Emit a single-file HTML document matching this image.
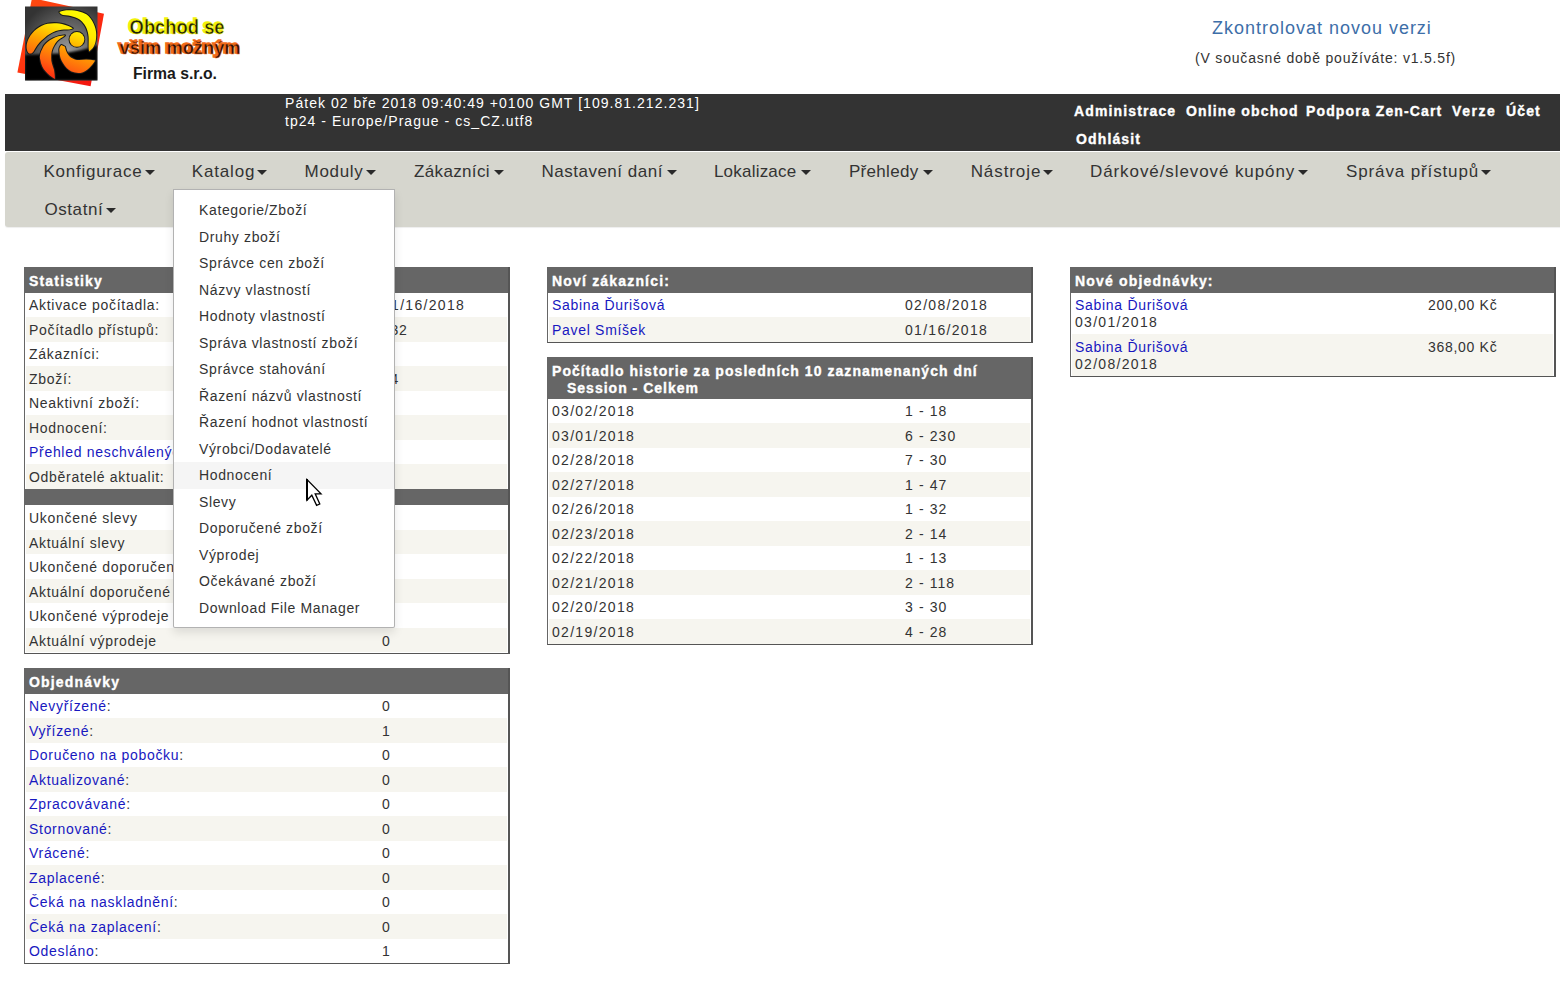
<!DOCTYPE html>
<html lang="cs"><head><meta charset="utf-8"><title>Zen Cart Admin</title>
<style>
html,body{margin:0;padding:0;width:1560px;height:981px;overflow:hidden;background:#fff}
body{font-family:"Liberation Sans",sans-serif;color:#333;font-size:14px;position:relative}
.a{position:absolute;white-space:nowrap}
a{text-decoration:none}
#logo{left:0;top:0}
.lt{font-weight:bold;font-family:"Liberation Sans",sans-serif}
#hdr{left:5px;top:94px;width:1600px;height:57px;background:#333}
#nav{left:5px;top:152px;width:1600px;height:75px;background:#d6d6ce;border-radius:3px;box-shadow:0 1px 1px rgba(0,0,0,.07)}
.hd{color:#fff;font-size:14px;line-height:17px;letter-spacing:1.04px}
.hl{color:#fff;font-size:14px;line-height:17px;font-weight:bold;letter-spacing:1.13px;-webkit-text-stroke:.35px #fff}
.ni{font-size:17px;line-height:20px;color:#333;letter-spacing:.06em}
.car{display:block;width:0;height:0;border-top:5px solid #2a2a2a;border-left:5px solid transparent;border-right:5px solid transparent}
#dd{left:173px;top:189px;width:220px;height:437px;background:#fff;border:1px solid rgba(0,0,0,.3);border-radius:0 0 2px 2px;box-shadow:0 5px 10px rgba(0,0,0,.1)}
.di{position:absolute;left:0;width:220px;height:26.5px;font-size:14px;line-height:17px;letter-spacing:.045em;color:#333}
.di span{position:absolute;left:25px;top:5.3px}
.box{position:absolute;width:483px;border-left:1px solid #666;border-right:2px solid #555;border-bottom:1px solid #555;background:#fff;padding-bottom:.5px}
.th{background:#666;color:#fff;font-weight:bold;height:25.5px;position:relative}
.th span{position:absolute;left:4px;top:6px;line-height:17px;letter-spacing:1.18px;-webkit-text-stroke:.35px #fff}
.r{height:24.5px;position:relative;margin:0 1px 0 1px}
.r.c{background:#f6f5ef}
.r span{position:absolute;top:4.9px;line-height:17px;letter-spacing:.7px}
.r span.n{letter-spacing:1.3px}
.r span.m{letter-spacing:1.1px}
.l1{left:3px}
.l2{left:356px}
a.k{color:#1818c0}
.ver1{left:1212px;top:16.8px;font-size:18px;line-height:22px;color:#3d6ea8;letter-spacing:.055em}
.ver2{left:1195px;top:50px;font-size:14px;line-height:17px;color:#333;letter-spacing:.81px}
</style></head>
<body>
<svg id="logo" class="a" width="250" height="92" viewBox="0 0 250 92">
<defs><filter id="bl" x="-10%" y="-10%" width="120%" height="120%"><feGaussianBlur stdDeviation="1.2"/></filter><clipPath id="sq"><rect x="25" y="6.5" width="72.5" height="74"/></clipPath>
<radialGradient id="gb2" gradientUnits="userSpaceOnUse" cx="68" cy="50" r="50"><stop offset="0" stop-color="#9a9a9a"/><stop offset=".45" stop-color="#6a6a6a"/><stop offset="1" stop-color="#333"/></radialGradient><linearGradient id="gb" x1="0" y1="0" x2="0" y2="1"><stop offset="0" stop-color="#3a3a3a"/><stop offset=".55" stop-color="#8a8a8a"/><stop offset=".64" stop-color="#0a0a0a"/><stop offset="1" stop-color="#000"/></linearGradient>
<linearGradient id="gy" gradientUnits="userSpaceOnUse" x1="80" y1="10" x2="55" y2="80"><stop offset="0" stop-color="#ffff00"/><stop offset=".3" stop-color="#ffe800"/><stop offset=".55" stop-color="#ffa000"/><stop offset=".8" stop-color="#ff6010"/><stop offset="1" stop-color="#ff2a10"/></linearGradient>
<linearGradient id="gr" x1="0" y1="0" x2="1" y2="1"><stop offset="0" stop-color="#ff5010"/><stop offset=".5" stop-color="#ff3010"/><stop offset="1" stop-color="#f01010"/></linearGradient>
</defs>
<polygon points="32,-2 104,13.8 90.6,86.2 17.4,72.6" fill="url(#gr)"/>
<rect x="25" y="6.5" width="72.5" height="74" fill="url(#gb2)"/>
<path d="M25,55 C40,54 55,54 68,52.5 C80,51 90,48 97.5,45 L97.5,80.5 L25,80.5 Z" fill="#050505" filter="url(#bl)" clip-path="url(#sq)"/>
<g fill="url(#gy)" stroke="#1a1a1a" stroke-width="2" stroke-linejoin="round" paint-order="stroke">
<path d="M59.4,11.9 C66,9 82,10 88.5,16 C94,22 97,30 96.1,38 C95.5,44 94,48 89.3,51.4 C88,48 89,42 88.6,36.7 C88,30 86,26 82,21.5 C77,17 70,15.5 63.1,15.1 C61,14.5 60,13 59.4,11.9 Z"/>
<path d="M72.8,28.4 C67,24 56,22 47.5,23.8 C40,25.5 32.5,31 28.5,39 C26,44 26,50 28.5,53 C30.5,54.5 32.5,53 33.5,51.5 C36,47 38.5,43.5 41.5,40.6 C45,37 49,34 52.5,32.4 C57,30.5 61,29.8 64,29.6 C68,29.6 71,29.2 72.8,28.4 Z"/>
<path d="M65,35.3 C60,35.5 56,37 53,38.5 C48,41 44,45 42.9,47.7 C40,53 39.5,56 40.2,59.6 C41,65 43,69 45.7,71.6 C48,74.5 51,77 54.9,78.9 C55,76 54.5,73 54,69.7 C52.5,65 51,62 51.2,57.8 C51,53 52,49 53.9,45.9 C56,42 58,40 60.4,38.5 C62,37.5 64,36.5 65,35.3 Z"/>
<path d="M61.3,45 C59.5,47 59,49 59.4,51.4 C59.5,56 61,60 63.1,63.3 C65.5,67 68,70 71.4,71.6 C75,73 78.5,73.5 82.4,72.5 C87,71 92,66 95.2,60.6 C92,60 89,59.8 86.1,59.6 C82,60 78,60.5 75,59.6 C72,58.5 69.5,57 67.7,54.1 C66,51.5 65.5,49 65,46.8 C63.5,46 62.5,45.5 61.3,45 Z"/>
<circle cx="76.9" cy="39.4" r="7.4"/>
</g>
<text x="128" y="33" class="lt" font-size="19.5" fill="#f2f20a" stroke="#f2f20a" stroke-width="1.6" textLength="95" lengthAdjust="spacingAndGlyphs">Obchod se</text>
<text x="129.6" y="33.6" class="lt" font-size="19.5" fill="#202008" stroke="#f2f20a" stroke-width=".55" textLength="95" lengthAdjust="spacingAndGlyphs">Obchod se</text>
<text x="118" y="53" class="lt" font-size="19" fill="#f26a18" stroke="#f26a18" stroke-width="1.6" textLength="121" lengthAdjust="spacingAndGlyphs">všim možným</text>
<text x="119.6" y="53.6" class="lt" font-size="19" fill="#2a1408" stroke="#f26a18" stroke-width=".55" textLength="121" lengthAdjust="spacingAndGlyphs">všim možným</text>
<text x="133" y="79" class="lt" font-size="16" fill="#1a1a1a" textLength="84" lengthAdjust="spacingAndGlyphs">Firma s.r.o.</text>
</svg>

<div class="a ver1">Zkontrolovat novou verzi</div>
<div class="a ver2">(V současné době používáte: v1.5.5f)</div>

<div id="hdr" class="a"></div>
<div class="a hd" style="left:285px;top:94.5px">Pátek 02 bře 2018 09:40:49 +0100 GMT [109.81.212.231]</div>
<div class="a hd" style="left:285px;top:112.5px">tp24 - Europe/Prague - cs_CZ.utf8</div>
<div class="a hl" style="left:1074px;top:103px">Administrace</div>
<div class="a hl" style="left:1186px;top:103px">Online obchod</div>
<div class="a hl" style="left:1306px;top:103px">Podpora Zen-Cart</div>
<div class="a hl" style="left:1452px;top:103px;letter-spacing:1.58px">Verze</div>
<div class="a hl" style="left:1506px;top:103px">Účet</div>
<div class="a hl" style="left:1076px;top:131px">Odhlásit</div>

<div id="nav" class="a"></div>
<div class="a ni" style="left:43.4px;top:162px;letter-spacing:0.76px">Konfigurace</div><i class="a car" style="left:145.0px;top:170px"></i>
<div class="a ni" style="left:191.8px;top:162px;letter-spacing:0.82px">Katalog</div><i class="a car" style="left:256.8px;top:170px"></i>
<div class="a ni" style="left:304.6px;top:162px;letter-spacing:0.68px">Moduly</div><i class="a car" style="left:366.1px;top:170px"></i>
<div class="a ni" style="left:414.0px;top:162px;letter-spacing:0.35px">Zákazníci</div><i class="a car" style="left:493.8px;top:170px"></i>
<div class="a ni" style="left:541.5px;top:162px;letter-spacing:0.5px">Nastavení daní</div><i class="a car" style="left:666.9px;top:170px"></i>
<div class="a ni" style="left:713.9px;top:162px;letter-spacing:0.22px">Lokalizace</div><i class="a car" style="left:800.9px;top:170px"></i>
<div class="a ni" style="left:848.9px;top:162px;letter-spacing:0.31px">Přehledy</div><i class="a car" style="left:923.1px;top:170px"></i>
<div class="a ni" style="left:970.7px;top:162px;letter-spacing:0.91px">Nástroje</div><i class="a car" style="left:1043.1px;top:170px"></i>
<div class="a ni" style="left:1090.0px;top:162px;letter-spacing:0.91px">Dárkové/slevové kupóny</div><i class="a car" style="left:1297.9px;top:170px"></i>
<div class="a ni" style="left:1346.0px;top:162px;letter-spacing:0.87px">Správa přístupů</div><i class="a car" style="left:1481.1px;top:170px"></i>
<div class="a ni" style="left:44.4px;top:199.5px;letter-spacing:0.59px">Ostatní</div><i class="a car" style="left:106px;top:207.5px"></i>

<!-- Statistiky -->
<div class="box" style="left:24px;top:267px">
 <div class="th"><span>Statistiky</span></div>
 <div class="r"><span class="l1">Aktivace počítadla:</span><span class="l2 n">01/16/2018</span></div>
 <div class="r c"><span class="l1">Počítadlo přístupů:</span><span class="l2">232</span></div>
 <div class="r"><span class="l1">Zákazníci:</span><span class="l2">2</span></div>
 <div class="r c"><span class="l1">Zboží:</span><span class="l2">14</span></div>
 <div class="r"><span class="l1">Neaktivní zboží:</span><span class="l2">0</span></div>
 <div class="r c"><span class="l1">Hodnocení:</span><span class="l2">1</span></div>
 <div class="r"><span class="l1"><a class="k">Přehled neschválených hodnocení</a>:</span><span class="l2">0</span></div>
 <div class="r c"><span class="l1">Odběratelé aktualit:</span><span class="l2">0</span></div>
 <div class="th" style="height:16.8px"></div>
 <div class="r"><span class="l1">Ukončené slevy</span><span class="l2">0</span></div>
 <div class="r c"><span class="l1">Aktuální slevy</span><span class="l2">0</span></div>
 <div class="r"><span class="l1">Ukončené doporučené zboží</span><span class="l2">0</span></div>
 <div class="r c"><span class="l1">Aktuální doporučené zboží</span><span class="l2">0</span></div>
 <div class="r"><span class="l1">Ukončené výprodeje</span><span class="l2">0</span></div>
 <div class="r c"><span class="l1">Aktuální výprodeje</span><span class="l2">0</span></div>
</div>

<!-- Objednavky -->
<div class="box" style="left:24px;top:668px;padding-bottom:0">
 <div class="th"><span>Objednávky</span></div>
 <div class="r"><span class="l1"><a class="k">Nevyřízené</a>:</span><span class="l2">0</span></div>
 <div class="r c"><span class="l1"><a class="k">Vyřízené</a>:</span><span class="l2">1</span></div>
 <div class="r"><span class="l1"><a class="k">Doručeno na pobočku</a>:</span><span class="l2">0</span></div>
 <div class="r c"><span class="l1"><a class="k">Aktualizované</a>:</span><span class="l2">0</span></div>
 <div class="r"><span class="l1"><a class="k">Zpracovávané</a>:</span><span class="l2">0</span></div>
 <div class="r c"><span class="l1"><a class="k">Stornované</a>:</span><span class="l2">0</span></div>
 <div class="r"><span class="l1"><a class="k">Vrácené</a>:</span><span class="l2">0</span></div>
 <div class="r c"><span class="l1"><a class="k">Zaplacené</a>:</span><span class="l2">0</span></div>
 <div class="r"><span class="l1"><a class="k">Čeká na naskladnění</a>:</span><span class="l2">0</span></div>
 <div class="r c"><span class="l1"><a class="k">Čeká na zaplacení</a>:</span><span class="l2">0</span></div>
 <div class="r"><span class="l1"><a class="k">Odesláno</a>:</span><span class="l2">1</span></div>
</div>

<!-- Novi zakaznici -->
<div class="box" style="left:547px;top:267px">
 <div class="th"><span>Noví zákazníci:</span></div>
 <div class="r"><span class="l1"><a class="k">Sabina Ďurišová</a></span><span class="l2 n">02/08/2018</span></div>
 <div class="r c"><span class="l1"><a class="k">Pavel Smíšek</a></span><span class="l2 n">01/16/2018</span></div>
</div>

<!-- Historie -->
<div class="box" style="left:547px;top:357px">
 <div class="th" style="height:41.6px"><span style="letter-spacing:1.06px">Počítadlo historie za posledních 10 zaznamenaných dní</span><span style="left:19px;top:23px;letter-spacing:1.0px">Session - Celkem</span></div>
 <div class="r"><span class="l1 n">03/02/2018</span><span class="l2 m">1 - 18</span></div>
 <div class="r c"><span class="l1 n">03/01/2018</span><span class="l2 m">6 - 230</span></div>
 <div class="r"><span class="l1 n">02/28/2018</span><span class="l2 m">7 - 30</span></div>
 <div class="r c"><span class="l1 n">02/27/2018</span><span class="l2 m">1 - 47</span></div>
 <div class="r"><span class="l1 n">02/26/2018</span><span class="l2 m">1 - 32</span></div>
 <div class="r c"><span class="l1 n">02/23/2018</span><span class="l2 m">2 - 14</span></div>
 <div class="r"><span class="l1 n">02/22/2018</span><span class="l2 m">1 - 13</span></div>
 <div class="r c"><span class="l1 n">02/21/2018</span><span class="l2 m">2 - 118</span></div>
 <div class="r"><span class="l1 n">02/20/2018</span><span class="l2 m">3 - 30</span></div>
 <div class="r c"><span class="l1 n">02/19/2018</span><span class="l2 m">4 - 28</span></div>
</div>

<!-- Nove objednavky -->
<div class="box" style="left:1070px;top:267px">
 <div class="th"><span>Nové objednávky:</span></div>
 <div class="r" style="height:41.5px"><span class="l1"><a class="k">Sabina Ďurišová</a><br><b style="font-weight:normal;letter-spacing:1.3px">03/01/2018</b></span><span class="l2">200,00 Kč</span></div>
 <div class="r c" style="height:41.5px"><span class="l1"><a class="k">Sabina Ďurišová</a><br><b style="font-weight:normal;letter-spacing:1.3px">02/08/2018</b></span><span class="l2">368,00 Kč</span></div>
</div>

<!-- dropdown -->
<div id="dd" class="a">
 <div class="di" style="top:7.20px"><span>Kategorie/Zboží</span></div>
 <div class="di" style="top:33.68px"><span>Druhy zboží</span></div>
 <div class="di" style="top:60.16px"><span>Správce cen zboží</span></div>
 <div class="di" style="top:86.64px"><span>Názvy vlastností</span></div>
 <div class="di" style="top:113.12px"><span>Hodnoty vlastností</span></div>
 <div class="di" style="top:139.60px"><span>Správa vlastností zboží</span></div>
 <div class="di" style="top:166.08px"><span>Správce stahování</span></div>
 <div class="di" style="top:192.56px"><span>Řazení názvů vlastností</span></div>
 <div class="di" style="top:219.04px"><span>Řazení hodnot vlastností</span></div>
 <div class="di" style="top:245.52px"><span>Výrobci/Dodavatelé</span></div>
 <div class="di" style="top:272.00px;background:#f5f5f5"><span>Hodnocení</span></div>
 <div class="di" style="top:298.48px"><span>Slevy</span></div>
 <div class="di" style="top:324.96px"><span>Doporučené zboží</span></div>
 <div class="di" style="top:351.44px"><span>Výprodej</span></div>
 <div class="di" style="top:377.92px"><span>Očekávané zboží</span></div>
 <div class="di" style="top:404.40px"><span>Download File Manager</span></div>
</div>

<!-- cursor -->
<svg class="a" style="left:300px;top:474px" width="30" height="36" viewBox="0 0 30 36">
<path d="M7,5.6 L7,26.2 L11.8,21.2 L16.6,31.4 L19.8,30 L15.2,19.8 L21,19.8 Z" fill="#fff" stroke="#000" stroke-width="1.3" stroke-linejoin="miter"/><rect x="6" y="5" width="2" height="21.5" fill="#000"/>
</svg>
</body></html>
